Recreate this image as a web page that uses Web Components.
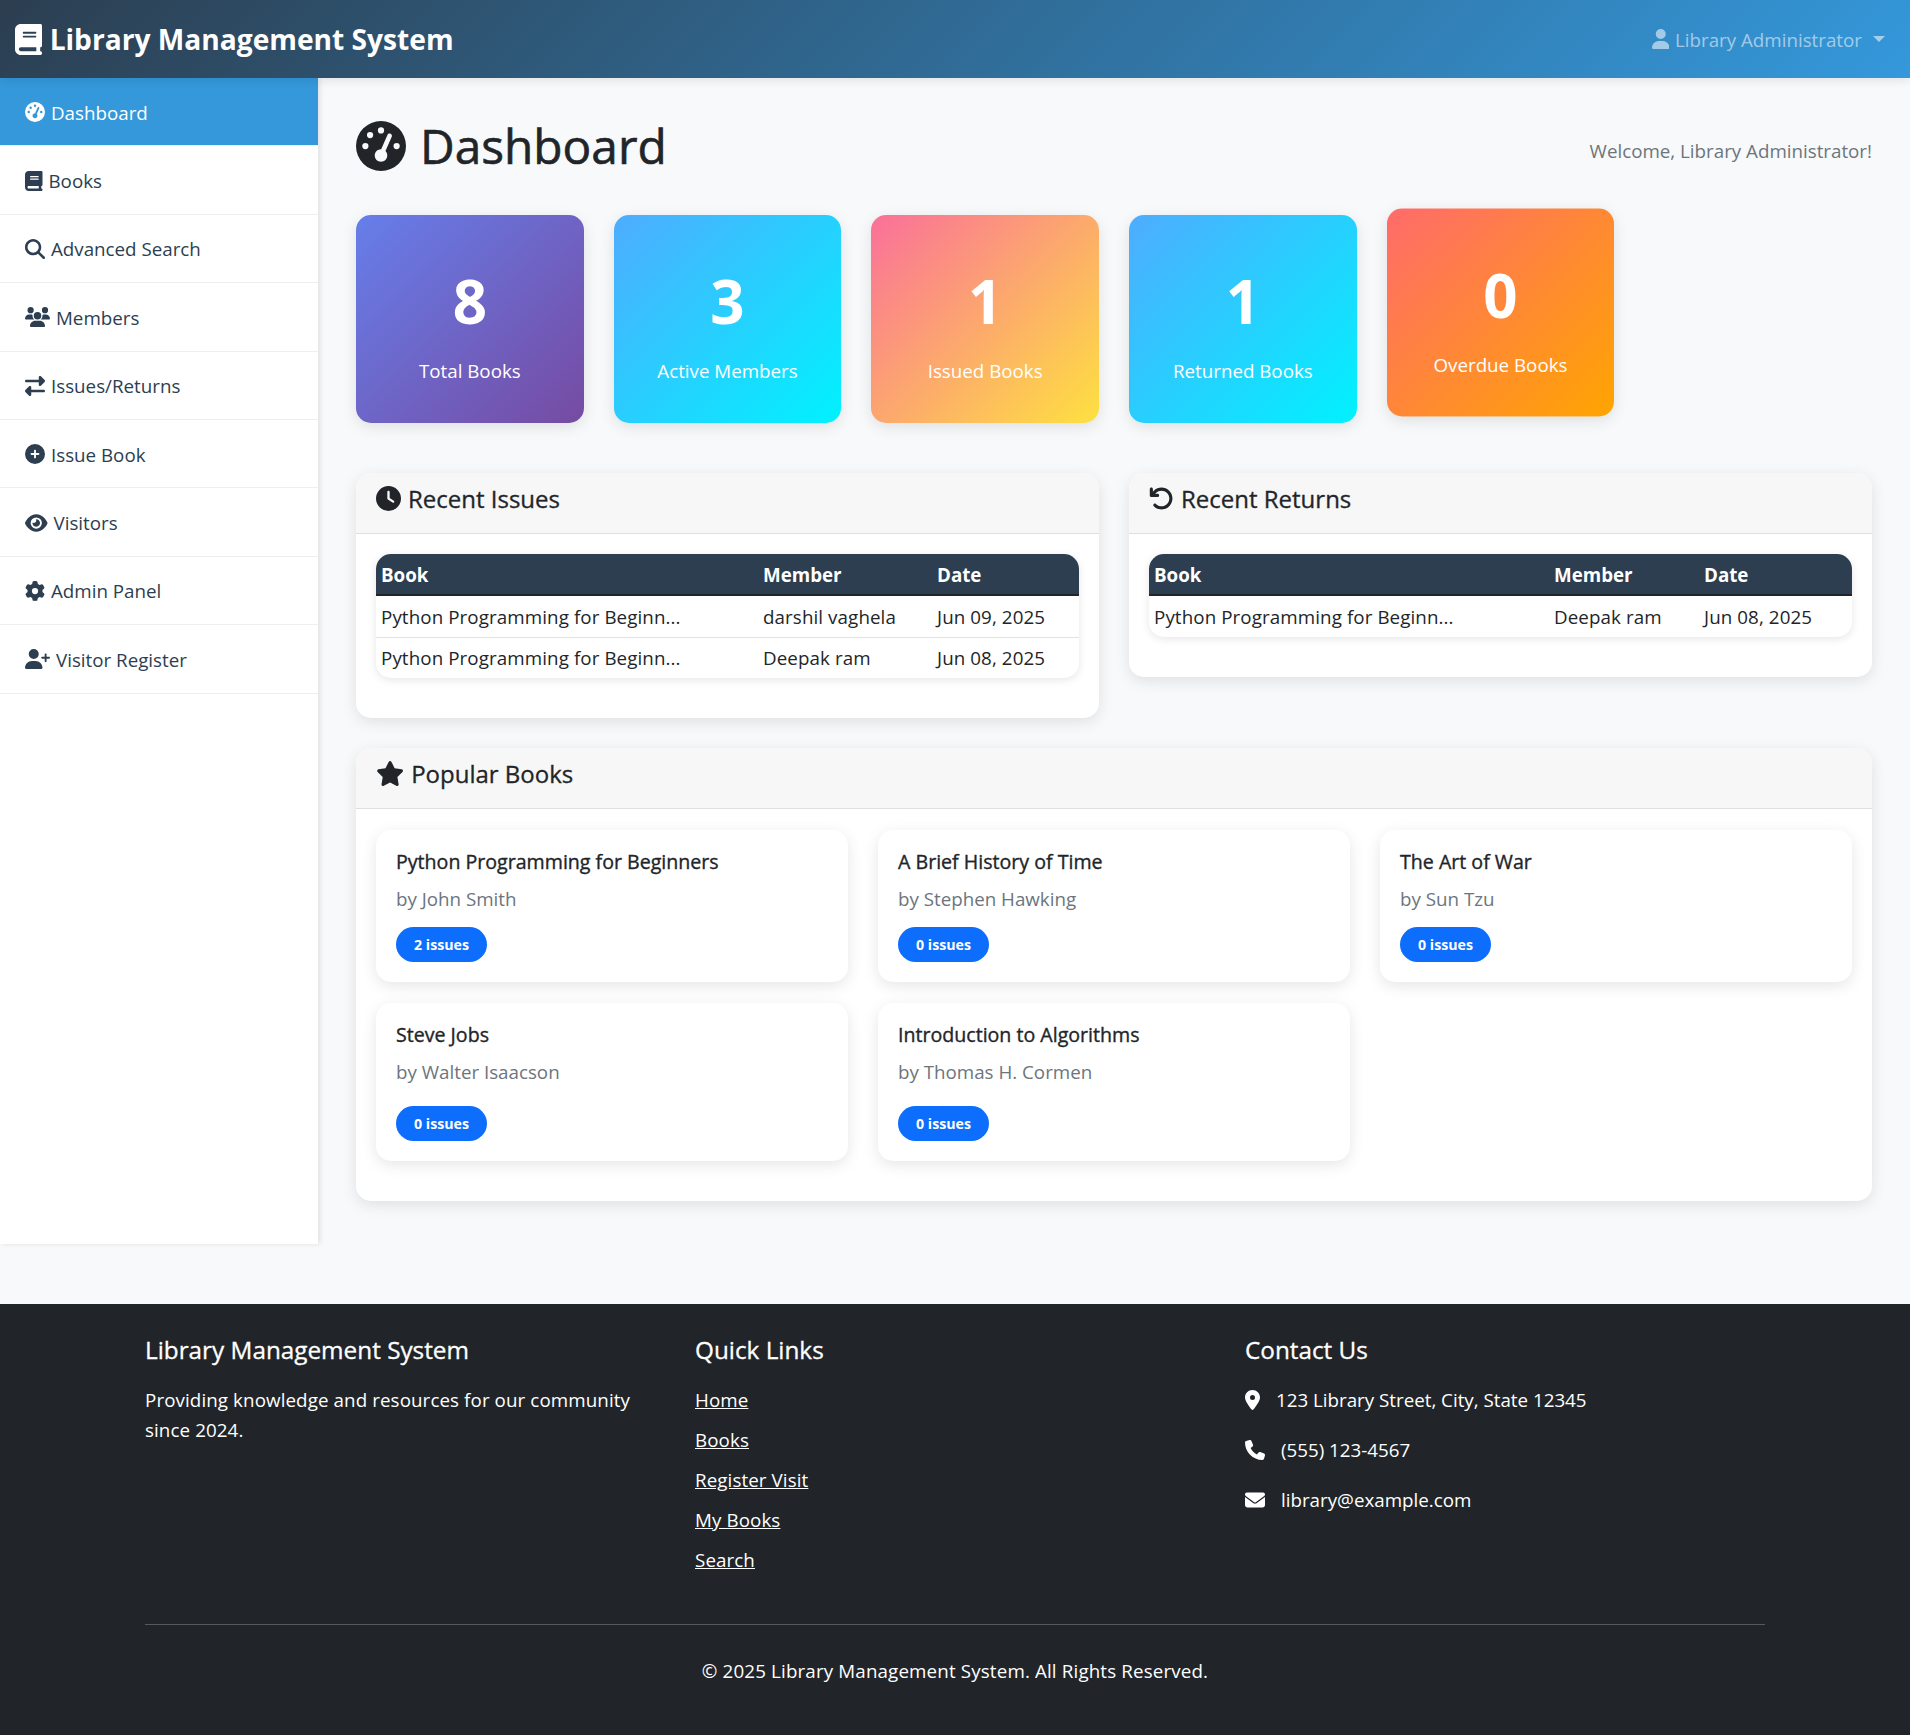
<!DOCTYPE html>
<html>
<head>
    <meta charset="utf-8">
    <title>Library Management System</title>
    <style>
        html, body {
            margin: 0;
            background: #f8f9fa;
            color: #212529;
            font-family: "Open Sans", "Noto Sans", sans-serif;
            font-size: 18.75px;
            line-height: 27px;
        }
        .layout {
            display: flex;
            align-items: stretch;
            margin-bottom: 60px;
        }
        .content {
            flex: 1;
            min-width: 0;
            padding: 38px 38px 43px;
        }
        .top-row {
            display: grid;
            grid-template-columns: 1fr 1fr;
            gap: 30px;
            align-items: start;
            margin: 50px 0 30.5px;
        }
    </style>
</head>
<body>
    <lib-navbar></lib-navbar>
    <div class="layout">
        <lib-sidebar>
            <side-link icon="gauge" active>Dashboard</side-link>
            <side-link icon="book">Books</side-link>
            <side-link icon="search">Advanced Search</side-link>
            <side-link icon="users">Members</side-link>
            <side-link icon="exchange">Issues/Returns</side-link>
            <side-link icon="plus">Issue Book</side-link>
            <side-link icon="eye">Visitors</side-link>
            <side-link icon="gear">Admin Panel</side-link>
            <side-link icon="userplus">Visitor Register</side-link>
        </lib-sidebar>
        <div class="content">
            <page-title icon="gauge" welcome="Welcome, Library Administrator!">Dashboard</page-title>
            <stat-row>
                <stat-card value="8" from="#667eea" to="#764ba2">Total Books</stat-card>
                <stat-card value="3" from="#4facfe" to="#00f2fe">Active Members</stat-card>
                <stat-card value="1" from="#fa709a" to="#fee140">Issued Books</stat-card>
                <stat-card value="1" from="#4facfe" to="#00f2fe">Returned Books</stat-card>
                <stat-card value="0" from="#ff6b6b" to="#ffa500" lifted>Overdue Books</stat-card>
            </stat-row>
            <div class="top-row">
                <panel-card icon="clock" heading="Recent Issues">
                    <data-table cols="382px 174px 1fr" rows="Python Programming for Beginn...|darshil vaghela|Jun 09, 2025;Python Programming for Beginn...|Deepak ram|Jun 08, 2025"></data-table>
                </panel-card>
                <panel-card icon="undo" heading="Recent Returns">
                    <data-table cols="400px 150px 1fr" rows="Python Programming for Beginn...|Deepak ram|Jun 08, 2025"></data-table>
                </panel-card>
            </div>
            <panel-card icon="star" heading="Popular Books" flush>
                <book-grid>
                    <book-card title="Python Programming for Beginners" author="John Smith" issues="2"></book-card>
                    <book-card title="A Brief History of Time" author="Stephen Hawking" issues="0"></book-card>
                    <book-card title="The Art of War" author="Sun Tzu" issues="0"></book-card>
                    <book-card title="Steve Jobs" author="Walter Isaacson" issues="0" tall></book-card>
                    <book-card title="Introduction to Algorithms" author="Thomas H. Cormen" issues="0" tall></book-card>
                </book-grid>
            </panel-card>
        </div>
    </div>
    <lib-footer></lib-footer>

    <script>
        // Font Awesome 6 solid outlines, [viewBox width, path]
        const ICONS = {
            gauge: [512, 'M0 256a256 256 0 1 1 512 0A256 256 0 1 1 0 256zM288 96a32 32 0 1 0 -64 0 32 32 0 1 0 64 0zM256 416c35.3 0 64-28.7 64-64c0-17.4-6.9-33.1-18.1-44.6L366 161.7c5.3-12.1-.2-26.3-12.3-31.6s-26.3 .2-31.6 12.3L257.9 288c-.6 0-1.3 0-1.9 0c-35.3 0-64 28.7-64 64s28.7 64 64 64zM176 144a32 32 0 1 0 -64 0 32 32 0 1 0 64 0zM96 288a32 32 0 1 0 0-64 32 32 0 1 0 0 64zm352-32a32 32 0 1 0 -64 0 32 32 0 1 0 64 0z'],
            book: [448, 'M96 0C43 0 0 43 0 96V416c0 53 43 96 96 96H384h32c17.7 0 32-14.3 32-32s-14.3-32-32-32V384c17.7 0 32-14.3 32-32V32c0-17.7-14.3-32-32-32H384 96zm0 384H352v64H96c-17.7 0-32-14.3-32-32s14.3-32 32-32zm32-240c0-8.8 7.2-16 16-16H336c8.8 0 16 7.2 16 16s-7.2 16-16 16H144c-8.8 0-16-7.2-16-16zm16 48H336c8.8 0 16 7.2 16 16s-7.2 16-16 16H144c-8.8 0-16-7.2-16-16s7.2-16 16-16z'],
            search: [512, 'M416 208c0 45.9-14.9 88.3-40 122.7L502.6 457.4c12.5 12.5 12.5 32.8 0 45.3s-32.8 12.5-45.3 0L330.7 376c-34.4 25.2-76.8 40-122.7 40C93.1 416 0 322.9 0 208S93.1 0 208 0S416 93.1 416 208zM208 352a144 144 0 1 0 0-288 144 144 0 1 0 0 288z'],
            users: [640, 'M144 0a80 80 0 1 1 0 160A80 80 0 1 1 144 0zM512 0a80 80 0 1 1 0 160A80 80 0 1 1 512 0zM0 298.7C0 239.8 47.8 192 106.7 192h42.7c15.9 0 31 3.5 44.6 9.7c-1.3 7.2-1.9 14.7-1.9 22.3c0 38.2 16.8 72.5 43.3 96c-.2 0-.4 0-.7 0H21.3C9.6 320 0 310.4 0 298.7zM405.3 320c-.2 0-.4 0-.7 0c26.6-23.5 43.3-57.8 43.3-96c0-7.6-.7-15-1.9-22.3c13.6-6.3 28.7-9.7 44.6-9.7h42.7C592.2 192 640 239.8 640 298.7c0 11.8-9.6 21.3-21.3 21.3H405.3zM224 224a96 96 0 1 1 192 0 96 96 0 1 1 -192 0zM128 485.3C128 411.7 187.7 352 261.3 352H378.7C452.3 352 512 411.7 512 485.3c0 14.7-11.9 26.7-26.7 26.7H154.7c-14.7 0-26.7-11.9-26.7-26.7z'],
            exchange: [512, 'M32 96l320 0V32c0-12.9 7.8-24.6 19.8-29.6s25.7-2.2 34.9 6.9l96 96c6 6 9.4 14.1 9.4 22.6s-3.4 16.6-9.4 22.6l-96 96c-9.2 9.2-22.9 11.9-34.9 6.9s-19.8-16.6-19.8-29.6V160L32 160c-17.7 0-32-14.3-32-32s14.3-32 32-32zM480 352c17.7 0 32 14.3 32 32s-14.3 32-32 32H160v64c0 12.9-7.8 24.6-19.8 29.6s-25.7 2.2-34.9-6.9l-96-96c-6-6-9.4-14.1-9.4-22.6s3.4-16.6 9.4-22.6l96-96c9.2-9.2 22.9-11.9 34.9-6.9s19.8 16.6 19.8 29.6l0 64H480z'],
            plus: [512, 'M256 512A256 256 0 1 0 256 0a256 256 0 1 0 0 512zM232 344V280H168c-13.3 0-24-10.7-24-24s10.7-24 24-24h64V168c0-13.3 10.7-24 24-24s24 10.7 24 24v64h64c13.3 0 24 10.7 24 24s-10.7 24-24 24H280v64c0 13.3-10.7 24-24 24s-24-10.7-24-24z'],
            eye: [576, 'M288 32c-80.8 0-145.5 36.8-192.6 80.6C48.6 156 17.3 208 2.5 243.7c-3.3 7.9-3.3 16.7 0 24.6C17.3 304 48.6 356 95.4 399.4C142.5 443.2 207.2 480 288 480s145.5-36.8 192.6-80.6c46.8-43.5 78.1-95.4 93-131.1c3.3-7.9 3.3-16.7 0-24.6c-14.9-35.7-46.2-87.7-93-131.1C433.5 68.8 368.8 32 288 32zM144 256a144 144 0 1 1 288 0 144 144 0 1 1 -288 0zm144-64c0 35.3-28.7 64-64 64c-7.1 0-13.9-1.2-20.3-3.3c-5.5-1.8-11.9 1.6-11.7 7.4c.3 6.9 1.3 13.8 3.2 20.7c13.7 51.2 66.4 81.6 117.6 67.9s81.6-66.4 67.9-117.6c-11.1-41.5-47.8-69.4-88.6-71.1c-5.8-.2-9.2 6.1-7.4 11.7c2.1 6.4 3.3 13.2 3.3 20.3z'],
            gear: [512, 'M495.9 166.6c3.2 8.7 .5 18.4-6.4 24.6l-43.3 39.4c1.1 8.3 1.7 16.8 1.7 25.4s-.6 17.1-1.7 25.4l43.3 39.4c6.9 6.2 9.6 15.9 6.4 24.6c-4.4 11.9-9.7 23.3-15.8 34.3l-4.7 8.1c-6.6 11-14 21.4-22.1 31.2c-5.9 7.2-15.7 9.6-24.5 6.8l-55.7-17.7c-13.4 10.3-28.2 18.9-44 25.4l-12.5 57.1c-2 9.1-9 16.3-18.2 17.8c-13.8 2.3-28 3.5-42.5 3.5s-28.7-1.2-42.5-3.5c-9.2-1.5-16.2-8.7-18.2-17.8l-12.5-57.1c-15.8-6.5-30.6-15.1-44-25.4L83.1 425.9c-8.8 2.8-18.6 .3-24.5-6.8c-8.1-9.8-15.5-20.2-22.1-31.2l-4.7-8.1c-6.1-11-11.4-22.4-15.8-34.3c-3.2-8.7-.5-18.4 6.4-24.6l43.3-39.4C64.6 273.1 64 264.6 64 256s.6-17.1 1.7-25.4L22.4 191.2c-6.9-6.2-9.6-15.9-6.4-24.6c4.4-11.9 9.7-23.3 15.8-34.3l4.7-8.1c6.6-11 14-21.4 22.1-31.2c5.9-7.2 15.7-9.6 24.5-6.8l55.7 17.7c13.4-10.3 28.2-18.9 44-25.4l12.5-57.1c2-9.1 9-16.3 18.2-17.8C227.3 1.2 241.5 0 256 0s28.7 1.2 42.5 3.5c9.2 1.5 16.2 8.7 18.2 17.8l12.5 57.1c15.8 6.5 30.6 15.1 44 25.4l55.7-17.7c8.8-2.8 18.6-.3 24.5 6.8c8.1 9.8 15.5 20.2 22.1 31.2l4.7 8.1c6.1 11 11.4 22.4 15.8 34.3zM256 336a80 80 0 1 0 0-160 80 80 0 1 0 0 160z'],
            userplus: [640, 'M96 128a128 128 0 1 1 256 0A128 128 0 1 1 96 128zM0 482.3C0 383.8 79.8 304 178.3 304h91.4C368.2 304 448 383.8 448 482.3c0 16.4-13.3 29.7-29.7 29.7H29.7C13.3 512 0 498.7 0 482.3zM504 312V248H440c-13.3 0-24-10.7-24-24s10.7-24 24-24h64V136c0-13.3 10.7-24 24-24s24 10.7 24 24v64h64c13.3 0 24 10.7 24 24s-10.7 24-24 24H552v64c0 13.3-10.7 24-24 24s-24-10.7-24-24z'],
            user: [448, 'M224 256A128 128 0 1 0 224 0a128 128 0 1 0 0 256zm-45.7 48C79.8 304 0 383.8 0 482.3C0 498.7 13.3 512 29.7 512H418.3c16.4 0 29.7-13.3 29.7-29.7C448 383.8 368.2 304 269.7 304H178.3z'],
            clock: [512, 'M256 0a256 256 0 1 1 0 512A256 256 0 1 1 256 0zM232 120V256c0 8 4 15.5 10.7 20l96 64c11 7.4 25.9 4.4 33.3-6.7s4.4-25.9-6.7-33.3L280 243.2V120c0-13.3-10.7-24-24-24s-24 10.7-24 24z'],
            undo: [512, 'M125.7 160H176c17.7 0 32 14.3 32 32s-14.3 32-32 32H48c-17.7 0-32-14.3-32-32V64c0-17.7 14.3-32 32-32s32 14.3 32 32v51.2L97.6 97.6c87.5-87.5 229.3-87.5 316.8 0s87.5 229.3 0 316.8s-229.3 87.5-316.8 0c-12.5-12.5-12.5-32.8 0-45.3s32.8-12.5 45.3 0c62.5 62.5 163.8 62.5 226.3 0s62.5-163.8 0-226.3s-163.8-62.5-226.3 0L125.7 160z'],
            star: [576, 'M316.9 18C311.6 7 300.4 0 288.1 0s-23.4 7-28.8 18L195 150.3 51.4 171.5c-12 1.8-22 10.2-25.7 21.7s-.7 24.2 7.9 32.7L137.8 329 113.2 474.7c-2 12 3 24.2 12.9 31.3s23 8 33.8 2.3l128.3-68.5 128.3 68.5c10.8 5.7 23.9 4.9 33.8-2.3s14.9-19.3 12.9-31.3L438.5 329 542.7 225.9c8.6-8.5 11.7-21.2 7.9-32.7s-13.7-19.9-25.7-21.7L381.2 150.3 316.9 18z'],
            pin: [384, 'M215.7 499.2C267 435 384 279.4 384 192C384 86 298 0 192 0S0 86 0 192c0 87.4 117 243 168.3 307.2c12.3 15.3 35.1 15.3 47.4 0zM192 128a64 64 0 1 1 0 128 64 64 0 1 1 0-128z'],
            phone: [512, 'M164.9 24.6c-7.7-18.6-28-28.5-47.4-23.2l-88 24C12.1 30.2 0 46 0 64C0 311.4 200.6 512 448 512c18 0 33.8-12.1 38.6-29.5l24-88c5.3-19.4-4.6-39.7-23.2-47.4l-96-40c-16.3-6.8-35.2-2.1-46.3 11.6L304.7 368C234.3 334.7 177.3 277.7 144 207.3L193.3 167c13.7-11.2 18.4-30 11.6-46.3l-40-96z'],
            envelope: [512, 'M48 64C21.5 64 0 85.5 0 112c0 15.1 7.1 29.3 19.2 38.4L236.8 313.6c11.4 8.5 27 8.5 38.4 0L492.8 150.4c12.1-9.1 19.2-23.3 19.2-38.4c0-26.5-21.5-48-48-48H48zM0 176V384c0 35.3 28.7 64 64 64H448c35.3 0 64-28.7 64-64V176L294.4 339.2c-22.8 17.1-53.8 17.1-76.6 0L0 176z']
        };

        class Base extends HTMLElement {
            constructor() {
                super();
                this.attachShadow({mode: 'open'});
            }
            render(html) {
                this.shadowRoot.innerHTML = html;
            }
        }

        class FaIcon extends Base {
            connectedCallback() {
                const [w, d] = ICONS[this.getAttribute('name')];
                this.render(`<style>
                    :host { display: inline-block; height: 1em; width: ${w / 512}em; flex: none; line-height: 0; }
                    svg { display: block; width: 100%; height: 100%; fill: currentColor; }
                </style><svg viewBox="0 0 ${w} 512"><path d="${d}"></path></svg>`);
            }
        }

        class LibNavbar extends Base {
            connectedCallback() {
                this.render(`<style>
                    :host {
                        display: flex; align-items: center; justify-content: space-between;
                        position: relative; z-index: 2;
                        height: 78px; padding: 0 25px 0 15px; box-sizing: border-box;
                        background: linear-gradient(135deg, #2c3e50, #3498db);
                        box-shadow: 0 2px 10px rgba(0,0,0,.1);
                        color: #fff;
                    }
                    .brand { display: flex; align-items: center; font-size: 28.15px; font-weight: 700; }
                    .brand fa-icon { font-size: 31px; margin-right: 7.5px; }
                    .user { display: flex; align-items: center; color: rgba(255,255,255,.55); }
                    .user fa-icon { font-size: 20px; margin-right: 6px; }
                    .caret { margin-left: 11px; width: 0; height: 0; border: 6px solid transparent; border-top-color: currentColor; border-bottom: 0; }
                </style>
                <div class="brand"><fa-icon name="book"></fa-icon><span>Library Management System</span></div>
                <div class="user"><fa-icon name="user"></fa-icon><span>Library Administrator</span><div class="caret"></div></div>`);
            }
        }

        class LibSidebar extends Base {
            connectedCallback() {
                this.render(`<style>
                    :host { display: block; width: 318px; flex: none; background: #fff; box-shadow: 2px 0 5px rgba(0,0,0,.1); }
                </style><slot></slot>`);
            }
        }

        class SideLink extends Base {
            connectedCallback() {
                const active = this.hasAttribute('active');
                this.render(`<style>
                    :host {
                        display: flex; align-items: center; box-sizing: border-box;
                        height: 68.4px; padding: 1px 25px 0;
                        border-bottom: 1px solid #eee;
                        color: ${active ? '#fff' : '#2c3e50'};
                        background: ${active ? '#3498db' : 'transparent'};
                        background-clip: padding-box;
                    }
                    fa-icon { font-size: 20px; margin-right: 6px; }
                </style><fa-icon name="${this.getAttribute('icon')}"></fa-icon><slot></slot>`);
            }
        }

        class PageTitle extends Base {
            connectedCallback() {
                this.render(`<style>
                    :host { display: flex; justify-content: space-between; align-items: center; height: 60px; margin-bottom: 39px; }
                    h1 { display: flex; align-items: center; margin: 0; font-size: 47.8px; font-weight: 400; line-height: 60px; -webkit-text-stroke: .6px currentColor; }
                    fa-icon { font-size: 50px; margin-right: 14px; -webkit-text-stroke: 0; }
                    .welcome { color: #6c757d; margin-top: 8px; }
                </style>
                <h1><fa-icon name="${this.getAttribute('icon')}"></fa-icon><span><slot></slot></span></h1>
                <div class="welcome">${this.getAttribute('welcome')}</div>`);
            }
        }

        class StatRow extends Base {
            connectedCallback() {
                this.render(`<style>
                    :host { display: grid; grid-template-columns: repeat(6, 1fr); gap: 30px; }
                </style><slot></slot>`);
            }
        }

        class StatCard extends Base {
            connectedCallback() {
                this.render(`<style>
                    :host {
                        display: block; box-sizing: border-box; height: 208px; padding-top: 50px;
                        border-radius: 15px; text-align: center; color: #fff;
                        background: linear-gradient(135deg, ${this.getAttribute('from')}, ${this.getAttribute('to')});
                        box-shadow: 0 4px 15px rgba(0,0,0,.1);
                        ${this.hasAttribute('lifted') ? 'transform: translateY(-6.5px);' : ''}
                    }
                    .num { font-size: 60px; font-weight: 700; line-height: 72px; margin-bottom: 20px; }
                </style><div class="num">${this.getAttribute('value')}</div><slot></slot>`);
            }
        }

        class PanelCard extends Base {
            connectedCallback() {
                this.render(`<style>
                    :host { display: block; background: #fff; border-radius: 15px; box-shadow: 0 4px 15px rgba(0,0,0,.1); overflow: hidden; }
                    header {
                        display: flex; align-items: center; box-sizing: border-box; height: 61px; padding: 0 20px 9px;
                        background: #f7f7f7; border-bottom: 1px solid #dfdfdf;
                        font-size: 24px; font-weight: 400; -webkit-text-stroke: .3px currentColor;
                    }
                    fa-icon { font-size: 25px; margin-right: 7px; }
                    .body { padding: 20px; }
                </style>
                <header><fa-icon name="${this.getAttribute('icon')}"></fa-icon>${this.getAttribute('heading')}</header>
                <div class="body"><slot></slot></div>`);
            }
        }

        class DataTable extends Base {
            connectedCallback() {
                const cols = this.getAttribute('cols');
                const rows = this.getAttribute('rows').split(';').map(r => r.split('|'));
                this.render(`<style>
                    :host { display: block; margin-bottom: 20px; border-radius: 15px; box-shadow: 0 2px 8px rgba(0,0,0,.1); overflow: hidden; }
                    .row { display: grid; grid-template-columns: ${cols}; align-items: center; height: 41px; box-sizing: border-box; padding: 0; letter-spacing: .1px; }
                    .row span { padding-left: 5px; }
                    .row + .row { border-top: 1px solid #dee2e6; height: 41px; }
                    .head { height: 42px; background: #2c3e50; color: #fff; font-weight: 700; border-bottom: 2px solid #212529; letter-spacing: 0; }
                    .head + .row { border-top: 0; height: 40.5px; }
                </style>
                <div class="row head"><span>Book</span><span>Member</span><span>Date</span></div>
                ${rows.map(r => `<div class="row">${r.map(c => `<span>${c}</span>`).join('')}</div>`).join('')}`);
            }
        }

        class BookGrid extends Base {
            connectedCallback() {
                this.render(`<style>
                    :host { display: grid; grid-template-columns: repeat(3, 1fr); column-gap: 30px; row-gap: 21px; margin: 1px 0 20px; }
                </style><slot></slot>`);
            }
        }

        class BookCard extends Base {
            connectedCallback() {
                const gap = this.hasAttribute('tall') ? 20.5 : 15;
                this.render(`<style>
                    :host { display: block; padding: 20px; background: #fff; border-radius: 15px; box-shadow: 0 4px 15px rgba(0,0,0,.1); }
                    .title { font-size: 19.6px; font-weight: 400; line-height: 23px; margin-bottom: 12px; -webkit-text-stroke: .35px currentColor; }
                    .author { color: #6c757d; margin-bottom: ${gap}px; }
                    .badge { display: inline-block; box-sizing: border-box; height: 35px; width: 91px; border-radius: 18px; background: #0d6efd; color: #fff; font-size: 14.2px; font-weight: 700; line-height: 35px; text-align: center; }
                </style>
                <div class="title">${this.getAttribute('title')}</div>
                <div class="author">by ${this.getAttribute('author')}</div>
                <div class="badge">${this.getAttribute('issues')} issues</div>`);
            }
        }

        class LibFooter extends Base {
            connectedCallback() {
                this.render(`<style>
                    :host { display: block; height: 431px; box-sizing: border-box; padding-top: 31px; background: #212529; color: #fff; line-height: 30px; }
                    .wrap { width: 1620px; margin: 0 auto; }
                    .cols { display: grid; grid-template-columns: repeat(3, 1fr); gap: 30px; height: 289px; border-bottom: 1px solid #57595c; }
                    h5 { margin: 0 0 20px; font-size: 24.3px; font-weight: 400; line-height: 30px; -webkit-text-stroke: .3px currentColor; }
                    p { margin: 0; letter-spacing: .1px; }
                    a { display: block; width: max-content; color: #fff; margin-bottom: 10px; letter-spacing: .1px; }
                    .contact { display: flex; align-items: center; margin-bottom: 20px; }
                    .contact fa-icon { font-size: 20px; margin-right: 16px; }
                    .copy { text-align: center; margin-top: 31px; letter-spacing: .15px; }
                </style>
                <div class="wrap">
                    <div class="cols">
                        <div><h5>Library Management System</h5><p>Providing knowledge and resources for our community since 2024.</p></div>
                        <div><h5>Quick Links</h5><a href="#">Home</a><a href="#">Books</a><a href="#">Register Visit</a><a href="#">My Books</a><a href="#">Search</a></div>
                        <div><h5>Contact Us</h5>
                            <div class="contact"><fa-icon name="pin"></fa-icon>123 Library Street, City, State 12345</div>
                            <div class="contact"><fa-icon name="phone"></fa-icon>(555) 123-4567</div>
                            <div class="contact"><fa-icon name="envelope"></fa-icon>library@example.com</div>
                        </div>
                    </div>
                    <div class="copy">© 2025 Library Management System. All Rights Reserved.</div>
                </div>`);
            }
        }

        customElements.define('fa-icon', FaIcon);
        customElements.define('lib-navbar', LibNavbar);
        customElements.define('lib-sidebar', LibSidebar);
        customElements.define('side-link', SideLink);
        customElements.define('page-title', PageTitle);
        customElements.define('stat-row', StatRow);
        customElements.define('stat-card', StatCard);
        customElements.define('panel-card', PanelCard);
        customElements.define('data-table', DataTable);
        customElements.define('book-grid', BookGrid);
        customElements.define('book-card', BookCard);
        customElements.define('lib-footer', LibFooter);
    </script>
</body>
</html>
